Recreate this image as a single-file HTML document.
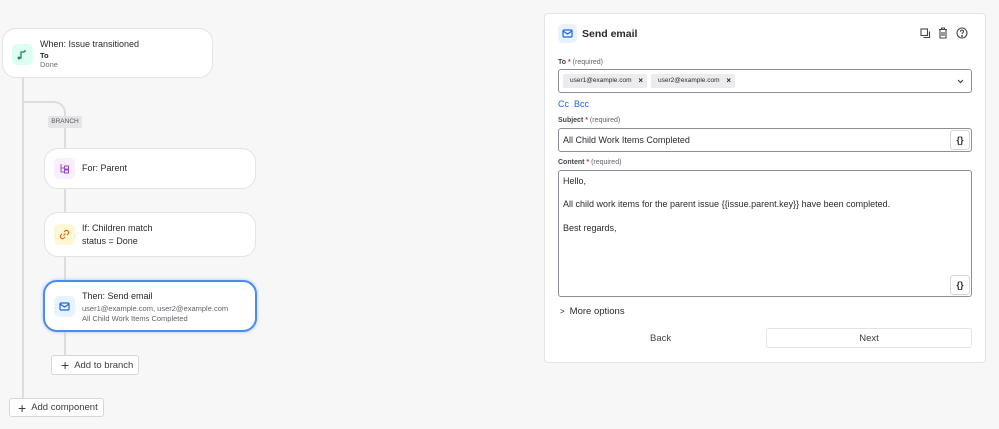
<!DOCTYPE html>
<html><head><meta charset="utf-8"><style>
*{box-sizing:border-box;margin:0;padding:0}
body{width:999px;height:429px;background:#f7f7f7;font-family:"Liberation Sans",sans-serif;color:#292a2e;position:relative;overflow:hidden}
.a{position:absolute}
.card{position:absolute;background:#fff;border:1px solid #e2e3e5;border-radius:14px}
.ic{position:absolute;width:21px;height:21px;border-radius:5px;display:flex;align-items:center;justify-content:center}
.t{position:absolute;font-size:9.5px;white-space:nowrap}
.line{position:absolute;background:#dcdddf}
.btn{position:absolute;background:#fff;border:1px solid #d6d7da;border-radius:3px;font-size:9.5px;display:flex;align-items:center;color:#3b3d42}
.lbl{position:absolute;font-size:7px;color:#44464b;font-weight:bold}
.lbl span{color:#c9372c}.lbl i{font-style:normal;font-weight:normal;color:#626369}
.field{position:absolute;border:1px solid #8c8f97;border-radius:3px;background:#fff}
.chip{position:absolute;background:#ebecee;border-radius:2px;font-size:6.5px;height:14px;top:4px;line-height:14px;padding-left:7px;color:#292a2e;white-space:nowrap}
.chip b{position:absolute;right:4px;top:0;font-size:8px}
.brace{position:absolute;width:20px;height:20px;border:1px solid #d6d7da;border-radius:3px;font-size:9px;font-weight:bold;display:flex;align-items:center;justify-content:center;background:#fff}
</style></head><body>
<div class="line" style="left:22px;top:78px;width:2px;height:320px"></div>
<div class="a" style="left:23px;top:101px;width:43px;height:30px;border-top:2px solid #dcdddf;border-right:2px solid #dcdddf;border-top-right-radius:12px"></div>
<div class="line" style="left:64px;top:128px;width:2px;height:228px"></div>
<div class="a" style="left:48px;top:116px;width:34px;height:12px;background:#e4e5e7;border-radius:2px;font-size:6.5px;color:#55575c;text-align:center;line-height:12px">BRANCH</div>

<div class="card" style="left:2px;top:28px;width:211px;height:50px">
 <div class="ic" style="left:9px;top:15px;background:#dcfff1"><svg width="11" height="11" viewBox="0 0 11 11" fill="none" stroke="#1f845a" stroke-width="1.3"><path d="M2 9 L4 9 L4 3 L7 3 L7 2"/><circle cx="2" cy="9" r="0.8" fill="#1f845a"/><path d="M7 2 L9 2"/></svg></div>
 <div class="t" style="left:37px;top:10px;font-size:9px">When: Issue transitioned</div>
 <div class="t" style="left:37px;top:22px;font-size:7.5px;font-weight:bold">To</div>
 <div class="t" style="left:37px;top:31px;font-size:7.5px;color:#6b6e76">Done</div>
</div>

<div class="card" style="left:44px;top:148px;width:212px;height:41px">
 <div class="ic" style="left:9px;top:9px;background:#f8eefe"><svg width="11" height="11" viewBox="0 0 11 11" fill="none" stroke="#964ac0" stroke-width="1"><path d="M2 1v8h3M2 5h3"/><rect x="5.5" y="3" width="4" height="3"/><rect x="5.5" y="7" width="4" height="3"/></svg></div>
 <div class="t" style="left:37px;top:14px;font-size:9px">For: Parent</div>
</div>

<div class="card" style="left:44px;top:212px;width:212px;height:45px">
 <div class="ic" style="left:9px;top:11px;background:#fff7d6"><svg width="11" height="11" viewBox="0 0 11 11" fill="none" stroke="#e06c00" stroke-width="1.2"><path d="M4.5 6.5l2-2M5 3l1-1a2 2 0 013 3l-1 1M6 8l-1 1a2 2 0 01-3-3l1-1"/></svg></div>
 <div class="t" style="left:37px;top:10px;font-size:9px">If: Children match</div>
 <div class="t" style="left:37px;top:23px;font-size:9px">status = Done</div>
</div>

<div class="card" style="left:43px;top:280px;width:214px;height:52px;border:2px solid #4c8cf0;box-shadow:0 0 3px #9cc1ff">
 <div class="ic" style="left:9px;top:14px;background:#e9f2ff"><svg width="11" height="9" viewBox="0 0 11 9" fill="none" stroke="#1868db" stroke-width="1.2"><rect x="1" y="1" width="9" height="7" rx="1"/><path d="M1 2l4.5 3L10 2"/></svg></div>
 <div class="t" style="left:37px;top:9px;font-size:9px">Then: Send email</div>
 <div class="t" style="left:37px;top:22px;font-size:7.5px;color:#626369">user1@example.com, user2@example.com</div>
 <div class="t" style="left:37px;top:32px;font-size:7.5px;color:#626369">All Child Work Items Completed</div>
</div>

<div class="btn" style="left:51px;top:355px;width:88px;height:20px;padding-left:9px"><span style="font-size:14px;margin-right:5px;font-weight:300">+</span>Add to branch</div>
<div class="btn" style="left:9px;top:398px;width:95px;height:19px;padding-left:8px"><span style="font-size:14px;margin-right:5px;font-weight:300">+</span>Add component</div>

<!-- panel -->
<div class="a" style="left:544px;top:13px;width:442px;height:350px;background:#fff;border:1px solid #e2e3e5;border-radius:4px"></div>
<div class="ic" style="left:558px;top:24px;width:19px;height:19px;background:#e9f2ff"><svg width="11" height="9" viewBox="0 0 11 9" fill="none" stroke="#1868db" stroke-width="1.2"><rect x="1" y="1" width="9" height="7" rx="1"/><path d="M1 2l4.5 3L10 2"/></svg></div>
<div class="t" style="left:582px;top:28px;font-size:10.5px;font-weight:bold">Send email</div>
<svg class="a" style="left:920px;top:28px" width="11" height="11" viewBox="0 0 11 11" fill="none" stroke="#44464b" stroke-width="1.1"><rect x="1" y="1" width="6.5" height="6.5"/><path d="M9.5 3.5v6h-6"/></svg>
<svg class="a" style="left:938px;top:27px" width="10" height="12" viewBox="0 0 10 12" fill="none" stroke="#44464b" stroke-width="1.1"><path d="M1 2.5h8M3.5 2.5V1h3v1.5M2 2.5v8.5h6V2.5M4 5v4M6 5v4"/></svg>
<svg class="a" style="left:956px;top:27px" width="12" height="12" viewBox="0 0 12 12" fill="none" stroke="#44464b" stroke-width="1.1"><circle cx="6" cy="6" r="5"/><path d="M4.5 4.7a1.5 1.5 0 113 0c0 1-1.5 1.2-1.5 2.3"/><circle cx="6" cy="9" r=".4" fill="#44464b"/></svg>

<div class="lbl" style="left:558px;top:59px">To <span>*</span> <i>(required)</i></div>
<div class="field" style="left:558px;top:69px;width:414px;height:24px">
 <div class="chip" style="left:4px;width:84px">user1@example.com<b>×</b></div>
 <div class="chip" style="left:92px;width:84px">user2@example.com<b>×</b></div>
 <svg class="a" style="right:7px;top:9px" width="7" height="5" viewBox="0 0 7 5" fill="none" stroke="#44464b" stroke-width="1.2"><path d="M1 1l2.5 2.5L6 1"/></svg>
</div>
<div class="t" style="left:558px;top:99px;color:#1868db;font-size:9px">Cc&nbsp;&nbsp;Bcc</div>
<div class="lbl" style="left:558px;top:117px">Subject <span>*</span> <i>(required)</i></div>
<div class="field" style="left:558px;top:128px;width:414px;height:24px">
 <div class="t" style="left:4px;top:6px;font-size:9px">All Child Work Items Completed</div>
 <div class="brace" style="right:1px;top:1px">{}</div>
</div>
<div class="lbl" style="left:558px;top:159px">Content <span>*</span> <i>(required)</i></div>
<div class="field" style="left:558px;top:170px;width:414px;height:127px">
 <div class="t" style="left:4px;top:5px;font-size:9px">Hello,</div>
 <div class="t" style="left:4px;top:28px;font-size:9px">All child work items for the parent issue {{issue.parent.key}} have been completed.</div>
 <div class="t" style="left:4px;top:52px;font-size:9px">Best regards,</div>
 <div class="brace" style="right:1px;top:104px">{}</div>
</div>
<div class="t" style="left:560px;top:306px;font-size:9.5px"><span style="font-size:8px;margin-right:5px">&gt;</span>More options</div>
<div class="t" style="left:650px;top:333px;color:#44464b">Back</div>
<div class="btn" style="left:766px;top:328px;width:206px;height:20px;justify-content:center;border-color:#e2e3e5">Next</div>
</body></html>
